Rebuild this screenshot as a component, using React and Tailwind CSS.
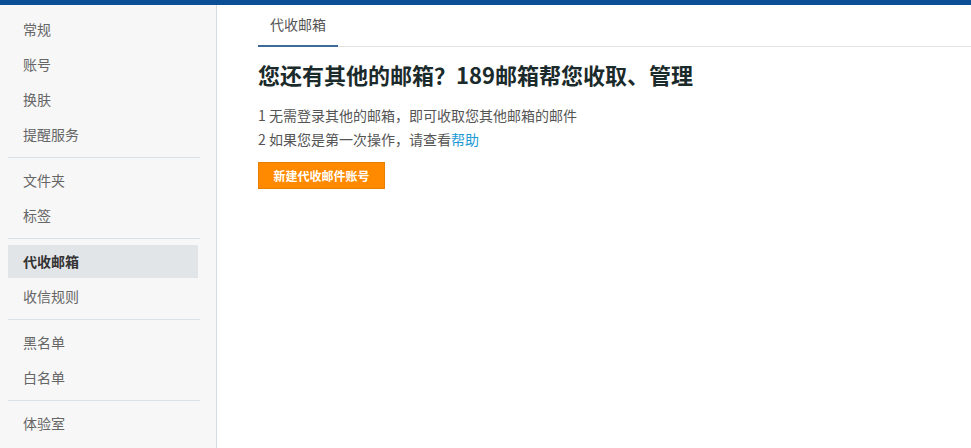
import React from "react";

const groups = [
  ["常规", "账号", "换肤", "提醒服务"],
  ["文件夹", "标签"],
  ["代收邮箱", "收信规则"],
  ["黑名单", "白名单"],
  ["体验室"],
];

export default function App() {
  return (
    <div
      className="w-[971px] h-[448px] overflow-hidden bg-white flex flex-col"
      style={{ fontFamily: '"Noto Sans CJK SC", "Noto Sans", sans-serif' }}
    >
      <div className="h-[5px] bg-[#0b4f96] shrink-0" />
      <div className="flex flex-1 min-h-0">
        <aside className="w-[217px] shrink-0 bg-[#f7f7f7] border-r border-[#d3dbe3] pt-[2px]">
          <div className="ml-[8px] w-[192px] flex flex-col">
            {groups.map((g, gi) => (
              <div
                key={gi}
                className={
                  "flex flex-col gap-[2px] py-[6px] " +
                  (gi < groups.length - 1 ? "border-b border-[#d9e2ea]" : "")
                }
              >
                {g.map((item) => {
                  const active = item === "代收邮箱";
                  return (
                    <div
                      key={item}
                      className={
                        "w-[190px] h-[33px] flex items-center pl-[15px] text-[14px] " +
                        (active
                          ? "bg-[#e2e5e7] text-[#333] font-bold"
                          : "text-[#666]")
                      }
                    >
                      {item}
                    </div>
                  );
                })}
              </div>
            ))}
          </div>
        </aside>
        <main className="flex-1 pl-[41px] flex flex-col">
          <div className="h-[42px] flex items-end border-b border-[#e2e2e2]">
            <div className="w-[80px] h-[41px] -mb-px border-b-2 border-[#3d6a98] flex items-center justify-center text-[14px] text-[#555] pb-[2px]">
              代收邮箱
            </div>
          </div>
          <h1 className="mt-[12px] text-[22px] leading-[30px] font-bold text-[#1b2a2b]">
            您还有其他的邮箱？189邮箱帮您收取、管理
          </h1>
          <div className="mt-[14px] text-[14px] leading-[24px] text-[#555]">
            <p>1 无需登录其他的邮箱，即可收取您其他邮箱的邮件</p>
            <p>
              2 如果您是第一次操作，请查看
              <span className="text-[#1d9ad6]">帮助</span>
            </p>
          </div>
          <div className="mt-[11px]">
            <button className="h-[27px] w-[127px] bg-[#ff8a00] border border-[#e87d00] text-white text-[12px] font-bold flex items-center justify-center">
              新建代收邮件账号
            </button>
          </div>
        </main>
      </div>
    </div>
  );
}
